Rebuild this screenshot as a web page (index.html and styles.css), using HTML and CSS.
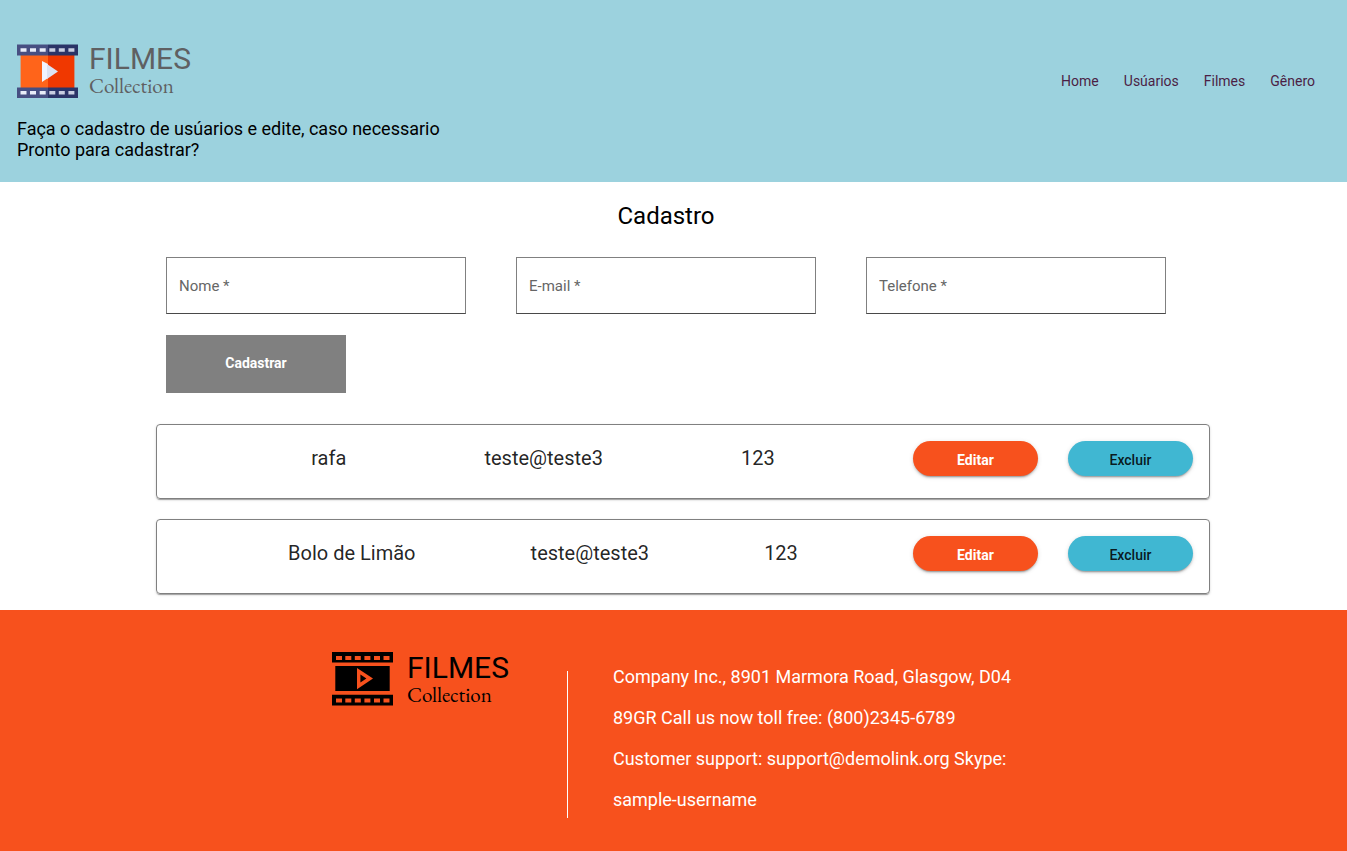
FILE: index.html
```html
<!DOCTYPE html>
<html lang="pt-BR">
<head>
<meta charset="utf-8">
<meta name="viewport" content="width=device-width, initial-scale=1">
<title>Filmes Collection</title>
<link rel="stylesheet" href="styles.css">
</head>
<body>
<header class="header">
  <div class="intro">
    <div class="logo">
      <svg class="logo-icon" viewBox="0 0 61 54" aria-hidden="true">
        <path fill="#ff641a" d="M3.6 10h27.4v34H3.6z"/>
        <path fill="#f03800" d="M31 10h26.4v34H31z"/>
        <path fill="#474f82" d="M0 .6h31v10.8H0zM0 43.4h31v10.8H0z"/>
        <path fill="#2b3467" d="M31 .6h30v10.8H31zM31 43.4h30v10.8H31z"/>
        <path fill="#f0f4ff" d="M25 17v21l6-4V20z"/>
        <path fill="#dce3f3" d="M30 20v15l11-7.5z"/>
        <path fill="#e9edf8" d="M3.5 4.2h6v3.6h-6zM13 4.2h6v3.6h-6zM22.7 4.2h6v3.6h-6zM3.5 47h6v3.6h-6zM13 47h6v3.6h-6zM22.7 47h6v3.6h-6z"/>
        <path fill="#c9cee0" d="M32.3 4.2h6v3.6h-6zM41.8 4.2h6v3.6h-6zM51.4 4.2h6v3.6h-6zM32.3 47h6v3.6h-6zM41.8 47h6v3.6h-6zM51.4 47h6v3.6h-6z"/>
      </svg>
      <div class="logo-text"><span class="logo-name">FILMES</span><span class="logo-sub">Collection</span></div>
    </div>
    <p class="tagline">Faça o cadastro de usúarios e edite, caso necessario<br>Pronto para cadastrar?</p>
  </div>
  <nav class="nav">
    <a href="#home">Home</a>
    <a href="#usuarios">Usúarios</a>
    <a href="#filmes">Filmes</a>
    <a href="#genero">Gênero</a>
  </nav>
</header>
<main class="main">
  <form class="form">
    <h1 class="title">Cadastro</h1>
    <div class="fields">
      <input class="field" type="text" placeholder="Nome *" aria-label="Nome">
      <input class="field" type="email" placeholder="E-mail *" aria-label="E-mail">
      <input class="field" type="tel" placeholder="Telefone *" aria-label="Telefone">
    </div>
    <button class="submit" type="button">Cadastrar</button>
  </form>
  <section class="list">
    <article class="card">
      <span>rafa</span><span>teste@teste3</span><span>123</span>
      <div class="actions"><button class="pill edit" type="button">Editar</button><button class="pill delete" type="button">Excluir</button></div>
    </article>
    <article class="card">
      <span>Bolo de Limão</span><span>teste@teste3</span><span>123</span>
      <div class="actions"><button class="pill edit" type="button">Editar</button><button class="pill delete" type="button">Excluir</button></div>
    </article>
  </section>
</main>
<footer class="footer">
  <div class="logo logo-dark">
    <svg class="logo-icon" viewBox="0 0 61 54" aria-hidden="true">
      <path fill="#000" fill-rule="evenodd" d="M0 0h61v10.6H0zM4 4v4h6V4zM13.3 4v4h6V4zM22.8 4v4h6V4zM32.4 4v4h6V4zM42 4v4h6V4zM51.5 4v4h6V4zM0 42.8h61v10.8H0zM4 46.4v4h6v-4zM13.3 46.4v4h6v-4zM22.8 46.4v4h6v-4zM32.4 46.4v4h6v-4zM42 46.4v4h6v-4zM51.5 46.4v4h6v-4zM3.3 14h54.4v25H3.3zM25 16v21.2l16-10.6zM28.4 22.6v8l6-4z"/>
    </svg>
    <div class="logo-text"><span class="logo-name">FILMES</span><span class="logo-sub">Collection</span></div>
  </div>
  <address class="contact">Company Inc., 8901 Marmora Road, Glasgow, D04 89GR Call us now toll free: (800)2345-6789 Customer support: support@demolink.org Skype: sample-username</address>
</footer>
</body>
</html>
```

FILE: styles.css
```css
* { box-sizing: border-box; }
body {
  margin: 0;
  min-height: 100vh;
  display: flex;
  flex-direction: column;
  font-family: Roboto, "Liberation Sans", sans-serif;
  color: #000;
  background: #fff;
}
button, input { font-family: inherit; }
.header {
  display: flex;
  justify-content: space-between;
  align-items: flex-start;
  padding: 44px 32px 22px 17px;
  background: #9cd2de;
}
.logo { display: flex; gap: 11px; color: #5f6062; }
.logo-icon { width: 61px; height: 54px; flex: none; }
.logo-text { display: flex; flex-direction: column; }
.logo-name { font-size: 30px; line-height: 30px; }
.logo-sub {
  font-family: "EB Garamond", "Liberation Serif", serif;
  font-size: 21px;
  line-height: 24px;
}
.logo-dark { gap: 14px; color: #000; }
.logo-dark .logo-text { padding-top: 1px; }
.tagline { margin: 20px 0 0; font-size: 18px; line-height: 21px; }
.nav { display: flex; gap: 25px; padding-top: 28px; }
.nav a {
  font-size: 14px;
  line-height: 18px;
  color: #4b1f45;
  text-decoration: none;
}
.main {
  width: 100%;
  max-width: 1075px;
  margin: 0 auto;
  padding: 0 1px 16px 20px;
}
.form { max-width: 1020px; padding: 0 10px; }
.title {
  margin: 0;
  padding: 18px 0 25px;
  font-size: 24px;
  line-height: 32px;
  font-weight: 400;
  text-align: center;
}
.fields { display: grid; grid-template-columns: repeat(3, 1fr); gap: 50px; }
.field {
  width: 100%;
  height: 57px;
  padding: 0 12px;
  border: 1px solid #808080;
  border-bottom-color: #494949;
  border-radius: 0;
  font-size: 15px;
  background: #fff;
}
.field::placeholder { color: #666; opacity: 1; }
.submit {
  display: block;
  width: 180px;
  height: 58px;
  margin-top: 21px;
  padding: 0 0 2px;
  border: 0;
  background: #808080;
  color: #fff;
  font-size: 14px;
  font-weight: 700;
}
.list { display: grid; gap: 20px; margin-top: 31px; }
.card {
  display: flex;
  align-items: flex-start;
  min-height: 75px;
  padding: 16px;
  border: 1px solid #808080;
  border-radius: 4px;
  box-shadow: 0 2px 1px -1px rgba(0,0,0,.2), 0 1px 1px rgba(0,0,0,.14), 0 1px 3px rgba(0,0,0,.12);
  color: rgba(0,0,0,.87);
  font-size: 20px;
  line-height: 34px;
}
.card > * { margin-left: auto; }
.actions { display: flex; gap: 30px; }
.pill {
  width: 125px;
  height: 35px;
  padding: 3px 0 0;
  border: 0;
  border-radius: 18px;
  font-size: 14px;
  font-weight: 500;
  box-shadow: 0 3px 1px -2px rgba(0,0,0,.2), 0 2px 2px rgba(0,0,0,.14), 0 1px 5px rgba(0,0,0,.12);
}
.edit { background: #f7511d; color: #fff; font-weight: 700; }
.delete { background: #40b7d2; color: rgba(0,0,0,.87); }
.footer {
  flex: 1;
  display: flex;
  justify-content: center;
  align-items: flex-start;
  gap: 58px;
  padding: 42px 16px 32px;
  background: #f7511d;
}
.contact {
  max-width: 448px;
  margin-top: 4px;
  padding-left: 46px;
  color: #fff;
  font-size: 18px;
  font-style: normal;
  font-weight: 400;
  line-height: 41px;
  background: linear-gradient(#fff, #fff) 0 15px / 1px 147px no-repeat;
}
```
